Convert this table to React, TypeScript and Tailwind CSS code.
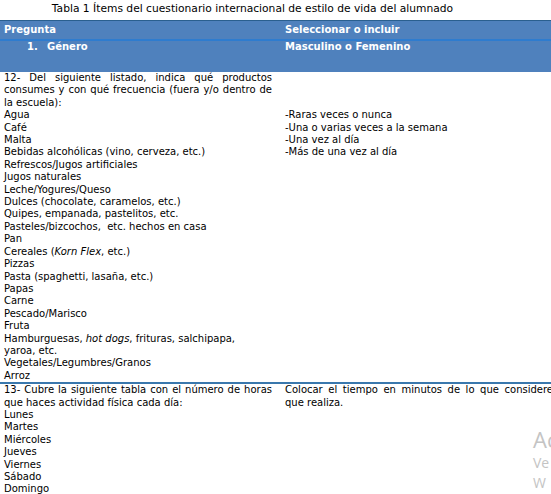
import React from "react";

const items12 = [
  "Agua",
  "Café",
  "Malta",
  "Bebidas alcohólicas (vino, cerveza, etc.)",
  "Refrescos/Jugos artificiales",
  "Jugos naturales",
  "Leche/Yogures/Queso",
  "Dulces (chocolate, caramelos, etc.)",
  "Quipes, empanada, pastelitos, etc.",
  "Pasteles/bizcochos,  etc. hechos en casa",
  "Pan",
];

const days = ["Lunes", "Martes", "Miércoles", "Jueves", "Viernes", "Sábado", "Domingo"];

export default function App() {
  return (
    <div className="relative w-[551px] h-[494px] overflow-hidden bg-white text-black font-['DejaVu_Sans',Verdana,sans-serif]">
      <div className="h-[20px] text-center text-[10.7px] leading-[17px] pr-[46px]">
        Tabla 1 Ítems del cuestionario internacional de estilo de vida del alumnado
      </div>
      <div className="w-[600px] text-[10px] leading-[12.4px]">
        {/* header */}
        <div className="bg-[#4f81bd] border-t border-[#2a5f8f] text-white font-bold">
          <div className="flex h-[20px] border-b-2 border-[#2e7ccf] items-center">
            <div className="w-[281px] pl-[4px]">Pregunta</div>
            <div className="flex-1 pl-[4px]">Seleccionar o incluir</div>
          </div>
          <div className="flex h-[31px]">
            <div className="w-[281px] pl-[27px] flex">
              <span className="w-[20px]">1.</span>
              <span>Género</span>
            </div>
            <div className="flex-1 pl-[4px]">Masculino o Femenino</div>
          </div>
        </div>
        {/* row 12 */}
        <div className="flex border-b-2 border-[#3a78ad]">
          <div className="w-[281px] pl-[4px] pr-[9px]">
            <p className="text-justify">
              12- Del siguiente listado, indica qué productos consumes y con qué frecuencia (fuera y/o dentro de la escuela):
            </p>
            {items12.map((t) => (
              <div key={t} className="whitespace-pre">{t}</div>
            ))}
            <div>
              Cereales (<i>Korn Flex</i>, etc.)
            </div>
            <div>Pizzas</div>
            <div>Pasta (spaghetti, lasaña, etc.)</div>
            <div>Papas</div>
            <div>Carne</div>
            <div>Pescado/Marisco</div>
            <div>Fruta</div>
            <div>
              Hamburguesas, <i>hot dogs</i>, frituras, salchipapa,
              <br />
              yaroa, etc.
            </div>
            <div>Vegetales/Legumbres/Granos</div>
            <div>Arroz</div>
          </div>
          <div className="flex-1 pl-[4px] pt-[37.2px]">
            <div>-Raras veces o nunca</div>
            <div>-Una o varias veces a la semana</div>
            <div>-Una vez al día</div>
            <div>-Más de una vez al día</div>
          </div>
        </div>
        {/* row 13 */}
        <div className="flex border-b-2 border-[#2f6b9c]">
          <div className="w-[281px] pl-[4px] pr-[9px]">
            <p className="text-justify">
              13- Cubre la siguiente tabla con el número de horas que haces actividad física cada día:
            </p>
            {days.map((d) => (
              <div key={d}>{d}</div>
            ))}
          </div>
          <div className="w-[278px] pl-[4px]">
            <div className="w-[268px] text-justify [text-align-last:justify]">
              Colocar el tiempo en minutos de lo que considere
            </div>
            <div>que realiza.</div>
          </div>
        </div>
      </div>
      {/* watermark */}
      <div className="absolute left-[533px] top-[428px] text-[#c4c4c4] font-['Open_Sans',sans-serif] leading-none">
        <div className="text-[22px]">Activar</div>
        <div className="text-[14px] mt-[6px]">Ve</div>
        <div className="text-[14px] mt-[6px]">W</div>
      </div>
    </div>
  );
}
